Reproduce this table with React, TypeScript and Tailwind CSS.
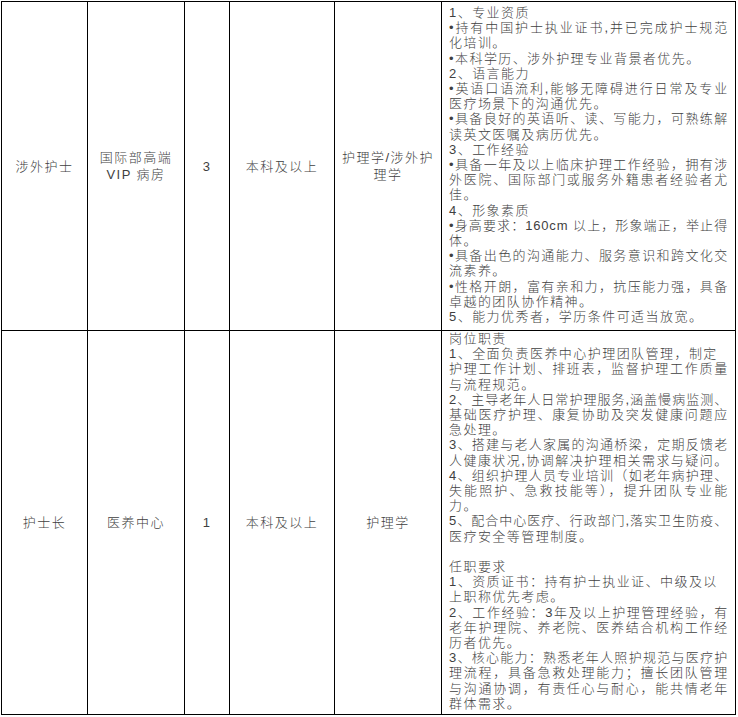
import React from "react";

type L = [string, boolean];

const row1: L[] = [
  ["1、专业资质", false],
  ["•持有中国护士执业证书,并已完成护士规范", true],
  ["化培训。", false],
  ["•本科学历、涉外护理专业背景者优先。", false],
  ["2、语言能力", false],
  ["•英语口语流利,能够无障碍进行日常及专业", true],
  ["医疗场景下的沟通优先。", false],
  ["•具备良好的英语听、读、写能力，可熟练解", true],
  ["读英文医嘱及病历优先。", false],
  ["3、工作经验", false],
  ["•具备一年及以上临床护理工作经验，拥有涉", true],
  ["外医院、国际部门或服务外籍患者经验者尤", true],
  ["佳。", false],
  ["4、形象素质", false],
  ["•身高要求：160cm 以上，形象端正，举止得", true],
  ["体。", false],
  ["•具备出色的沟通能力、服务意识和跨文化交", true],
  ["流素养。", false],
  ["•性格开朗，富有亲和力，抗压能力强，具备", true],
  ["卓越的团队协作精神。", false],
  ["5、能力优秀者，学历条件可适当放宽。", false],
];

const row2: L[] = [
  ["岗位职责", false],
  ["1、全面负责医养中心护理团队管理，制定", false],
  ["护理工作计划、排班表，监督护理工作质量", true],
  ["与流程规范。", false],
  ["2、主导老年人日常护理服务,涵盖慢病监测、", true],
  ["基础医疗护理、康复协助及突发健康问题应", true],
  ["急处理。", false],
  ["3、搭建与老人家属的沟通桥梁，定期反馈老", true],
  ["人健康状况,协调解决护理相关需求与疑问。", true],
  ["4、组织护理人员专业培训（如老年病护理、", true],
  ["失能照护、急救技能等），提升团队专业能", true],
  ["力。", false],
  ["5、配合中心医疗、行政部门,落实卫生防疫、", true],
  ["医疗安全等管理制度。", false],
  ["", false],
  ["任职要求", false],
  ["1、资质证书：持有护士执业证、中级及以", false],
  ["上职称优先考虑。", false],
  ["2、工作经验：3年及以上护理管理经验，有", true],
  ["老年护理院、养老院、医养结合机构工作经", true],
  ["历者优先。", false],
  ["3、核心能力：熟悉老年人照护规范与医疗护", true],
  ["理流程，具备急救处理能力；擅长团队管理", true],
  ["与沟通协调，有责任心与耐心，能共情老年", true],
  ["群体需求。", false],
];

function Lines({ lines }: { lines: L[] }) {
  return (
    <>
      {lines.map(([t, j], i) =>
        t === "" ? (
          <div key={i} className="h-[15.2px]" />
        ) : j ? (
          <div
            key={i}
            className="text-justify [text-align-last:justify] tracking-[0.8px]"
          >
            {t}
          </div>
        ) : (
          <div key={i} className="whitespace-nowrap tracking-[1.45px]">
            {t}
          </div>
        )
      )}
    </>
  );
}

const cell =
  "flex items-center justify-center text-center border-r border-b border-black tracking-[1.45px] leading-[17px]";

export default function App() {
  return (
    <div className="bg-white w-[738px] h-[717px] pt-[1px] pl-[1px] text-[13px] font-light text-[#3f3f3f] font-['Liberation_Sans','Noto_Sans_CJK_SC',sans-serif]">
      <div className="grid w-fit grid-cols-[86px_97px_45px_105px_107px_294px] grid-rows-[329px_384px] border-l border-t border-black">
        <div className={cell}>涉外护士</div>
        <div className={cell}>
          国际部高端
          <br />
          VIP 病房
        </div>
        <div className={cell}>3</div>
        <div className={cell}>本科及以上</div>
        <div className={cell}>
          护理学/涉外护
          <br />
          理学
        </div>
        <div className="border-r border-b border-black pt-[3px] pl-[7px] pr-[7px] leading-[15.2px]">
          <Lines lines={row1} />
        </div>

        <div className={cell}>护士长</div>
        <div className={cell}>医养中心</div>
        <div className={cell}>1</div>
        <div className={cell}>本科及以上</div>
        <div className={cell}>护理学</div>
        <div className="border-r border-b border-black pt-0 pl-[7px] pr-[7px] leading-[15.2px]">
          <Lines lines={row2} />
        </div>
      </div>
    </div>
  );
}
